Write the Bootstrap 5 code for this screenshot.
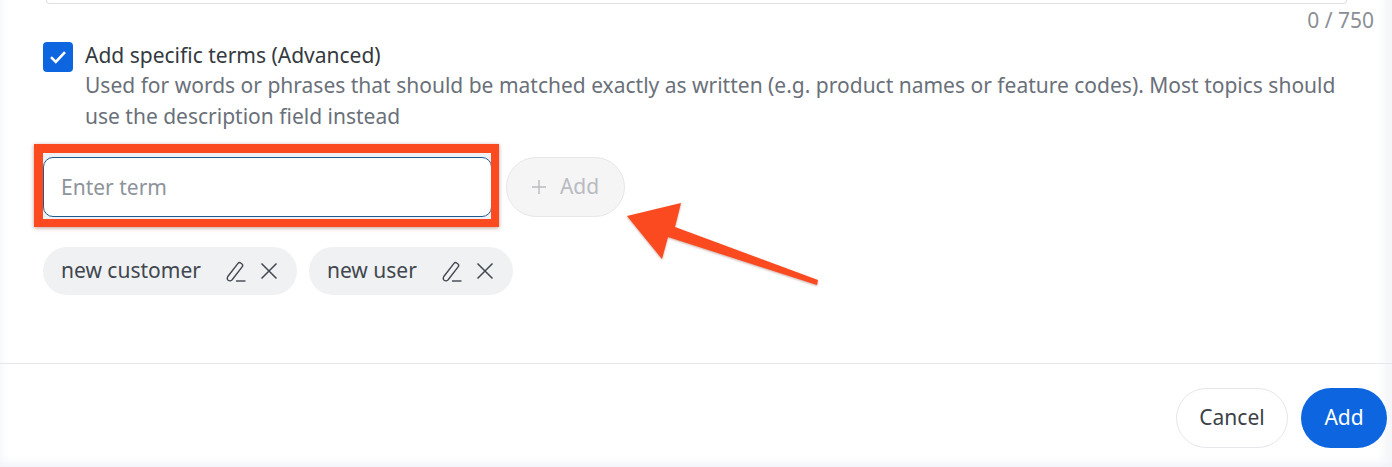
<!DOCTYPE html>
<html lang="en"><head><meta charset="utf-8"><title>Add term</title>
<link rel="stylesheet" href="https://cdn.jsdelivr.net/npm/bootstrap@5.3.0/dist/css/bootstrap.min.css">
<style>
html,body{height:467px;overflow:hidden}
body{background:#fff;font-family:"Noto Sans","Open Sans",sans-serif;color:#343a40;position:relative}
.sheet{background:#fff;height:467px;display:flex;flex-direction:column;box-shadow:inset 0 -12px 10px -8px #f1f3f9,inset 8px 0 8px -6px #f5f6fa,inset -16px 0 10px -8px #f5f6fa}
.main-area{padding:0 18px 0 43px;flex:1 1 auto}
.ta-end{height:4px;margin-right:27px;margin-left:3px;border:1px solid #dfe1e6;border-top:0;border-radius:0 0 8px 8px}
.counter{font-size:21px;line-height:24px;color:#8a8f96;text-align:right;margin-top:4px;height:24px}
.check-row{gap:12px;margin-top:8px}
.check-box{width:30px;height:30px;border-radius:4px;background:#0d66e0;flex:none;margin-top:2px;display:flex;align-items:center;justify-content:center}
.term-title{font-size:21px;line-height:30px;color:#343a40}
.term-help{font-size:21px;line-height:31px;color:#6a7079;max-width:1262px}
.term-row{gap:14px;margin-top:25px}
.term-input.form-control{width:449px;height:60px;border:1px solid #1f5a8c;border-radius:10px;font-size:21px;padding:0 17px;color:#343a40;box-shadow:0 0 0 6px #eef1f8;background:#fff}
.term-input::placeholder{color:#8d939b;opacity:1}
.btn.add-off,.btn.add-off:disabled{width:119px;height:60px;border-radius:30px;background:#f5f5f6;border:1px solid #e6e7e9;color:#b9bbbf;font-size:21px;gap:14px;padding:0;opacity:1}
.chip-row{gap:12px;margin-top:30px}
.term-chip{height:48px;border-radius:24px;background:#f0f1f3;font-size:21px;color:#41474e;padding:0 19px 0 18px;gap:25px}
.chip-icons{gap:14px}
.foot{border-top:1px solid #e6e7ea;height:104px;padding:24px 5px 0 0;justify-content:flex-end;gap:13px}
.foot-btn{height:60px;border-radius:30px;font-size:21px;padding:0;display:flex;align-items:center;justify-content:center}
.btn-cancel{width:112px;background:#fff;border:1px solid #e6e7ea;color:#3c4148}
.btn-go{width:86px;background:#0d66e0;border:0;color:#fff}
.mark-box{position:absolute;left:34px;top:144px;width:465px;height:83px;border-style:solid;border-color:#fb4a20;border-width:9px 8px 8px 9px;box-shadow:0 1px 4px rgba(120,40,20,.45);pointer-events:none}
.mark-arrow{position:absolute;left:620px;top:195px;pointer-events:none}
.mark-arrow path{fill:#fb4a20;filter:drop-shadow(0 1px 1px rgba(120,40,20,.4))}
</style></head>
<body>
<div class="sheet">
  <div class="main-area">
    <div class="ta-end"></div>
    <div class="counter">0 / 750</div>
    <div class="d-flex check-row">
      <span class="check-box"><svg width="18" height="14" viewBox="0 0 18 14" fill="none"><path d="M2 7.200 6.800 12 16 2.200" stroke="#fff" stroke-width="2.600"/></svg></span>
      <div>
        <div class="term-title">Add specific terms (Advanced)</div>
        <div class="term-help">Used for words or phrases that should be matched exactly as written (e.g. product names or feature codes). Most topics should use the description field instead</div>
      </div>
    </div>
    <div class="d-flex term-row">
      <input class="form-control term-input" type="text" placeholder="Enter term">
      <button class="btn add-off d-flex align-items-center justify-content-center" type="button" disabled>
        <svg width="14" height="14" viewBox="0 0 14 14" fill="none"><path d="M7 0v14M0 7h14" stroke="#b9bbbf" stroke-width="1.400"/></svg>Add
      </button>
    </div>
    <div class="d-flex chip-row">
      <div class="term-chip d-flex align-items-center"><span>new customer</span>
        <span class="d-flex align-items-center chip-icons">
          <svg width="20" height="21" viewBox="0 0 20 21" fill="none" stroke="#41474e" stroke-width="1.400"><path d="M1.800 15.500 11.800 2.600a2.300 2.300 0 0 1 3.200-.4l.7.5a2.300 2.300 0 0 1 .4 3.200L6.200 18.800c-1 .9-3 1.200-4 .5-.9-.7-1-2.600-.4-3.800Z"/><path d="M10 20h9.500"/></svg>
          <svg width="18" height="18" viewBox="0 0 18 18" fill="none" stroke="#41474e" stroke-width="1.500"><path d="M1.500 1.500l15 15M16.500 1.500l-15 15"/></svg>
        </span></div>
      <div class="term-chip d-flex align-items-center"><span>new user</span>
        <span class="d-flex align-items-center chip-icons">
          <svg width="20" height="21" viewBox="0 0 20 21" fill="none" stroke="#41474e" stroke-width="1.400"><path d="M1.800 15.500 11.800 2.600a2.300 2.300 0 0 1 3.200-.4l.7.5a2.300 2.300 0 0 1 .4 3.200L6.200 18.800c-1 .9-3 1.200-4 .5-.9-.7-1-2.600-.4-3.800Z"/><path d="M10 20h9.500"/></svg>
          <svg width="18" height="18" viewBox="0 0 18 18" fill="none" stroke="#41474e" stroke-width="1.500"><path d="M1.500 1.500l15 15M16.500 1.500l-15 15"/></svg>
        </span></div>
    </div>
  </div>
  <div class="d-flex foot">
    <button class="btn foot-btn btn-cancel" type="button">Cancel</button>
    <button class="btn foot-btn btn-go" type="button">Add</button>
  </div>
</div>
<div class="mark-box"></div>
<svg class="mark-arrow" width="210" height="100" viewBox="0 0 210 100"><path d="M7 21 61 8 55 32 198 85 197 90 48 42 42 64Z"/></svg>
<script src="https://cdn.jsdelivr.net/npm/bootstrap@5.3.0/dist/js/bootstrap.bundle.min.js"></script>
</body></html>
